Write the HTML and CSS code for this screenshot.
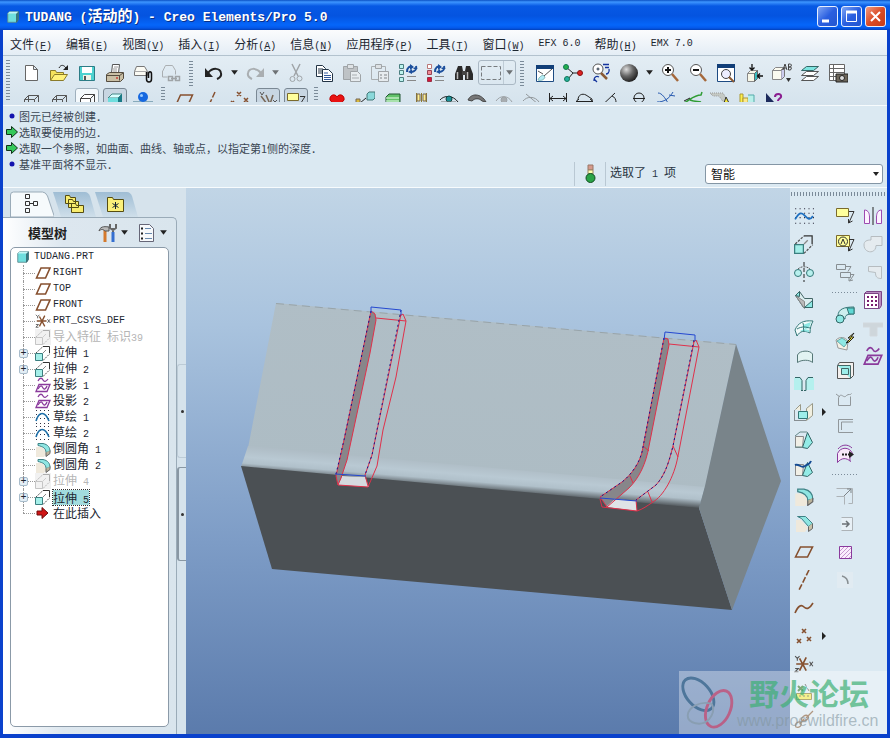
FILE: index.html
```html
<!DOCTYPE html>
<html lang="zh-CN">

<head>
	<meta charset="UTF-8">
	<title>TUDANG (活动的) - Creo Elements/Pro 5.0</title>
	<link rel="stylesheet" href="styles.css">
</head>

<body>

	<!-- 公用图标 -->
	<svg class="sprite">
		<symbol id="cube" viewBox="0 0 16 16">
			<path d="M2 4l2-2h10v9l-2 3H2z" fill="#6fdede" stroke="#5a8a90" />
			<path d="M12 14V4l2-2v9z" fill="#2a7f8c" stroke="#3d6a70" />
			<path d="M2 4l2-2h10l-2 2z" fill="#c4f4f4" stroke="none" />
		</symbol>
		<symbol id="plane" viewBox="0 0 16 16">
			<path d="M1.500 13l4.500-10h9l-4.500 10z" fill="none" stroke="#86502f" stroke-width="1.600" />
		</symbol>
		<symbol id="extrude" viewBox="0 0 16 16">
			<path d="M.5 8.500h7v7h-7z" fill="#a5efe9" stroke="#3b7f80" />
			<path d="M1 8l7-6.500M8 15.500l7-7" stroke="#555" stroke-dasharray="2 1" />
			<path d="M8 8l3-3" stroke="#888" />
			<path d="M8 1.500h6.500V8" stroke="#333" />
		</symbol>
		<symbol id="project" viewBox="0 0 16 16">
			<path d="M3 4c2-4 4-3 5-1s3 2 5-1M1 14.500l3-7h11l-3 7z" stroke="#8a3a9c" stroke-width="1.300" />
			<path d="M3 12c3-5 4-3 5-1s3 1 4-2" stroke="#8a3a9c" stroke-width="1.300" />
		</symbol>
		<symbol id="sketch" viewBox="0 0 18 16">
			<path d="M1 1.500h17M1 5.500h17M1 9.500h17M1 14.500h17" stroke="#334" stroke-dasharray="1 3" />
			<path d="M1 11c3-5 5-7 8-4s5 6 8 1" stroke="#1d6fc0" stroke-width="1.600" />
		</symbol>
		<symbol id="arc" viewBox="0 0 16 16">
			<path d="M1 1.500h15M1 5.500h15M1 9.500h15M1 14.500h15" stroke="#334" stroke-dasharray="1 3" />
			<path d="M1 12c3-10 9-10 13 0" stroke="#1d6fa8" stroke-width="1.600" />
		</symbol>
		<symbol id="round" viewBox="0 0 16 16">
			<path d="M1 6h6l5 6-3 4H1z" fill="#efe9dc" stroke="none" />
			<path d="M3 2.500h5c5 1 7 4 7 8l-4 1c0-4-3-6-8-7z" fill="#8fe6e2" stroke="#3f8286" />
			<path d="M11 11.500v4l4-3v-3" fill="#bbb39b" stroke="#666" />
		</symbol>
		<symbol id="csys" viewBox="0 0 18 16">
			<path d="M2 8h11M5 3l6 11M11 2L5 14" stroke="#86502f" stroke-width="1.500" />
			<path d="M1 1l2 2 2-2M3 3v2M14 6l3 4M17 6l-3 4M1 12h3l-3 3h3" stroke="#555" />
		</symbol>
		<symbol id="down" viewBox="0 0 8 8">
			<path d="M1 2h6L4 6z" fill="#222" stroke="none" />
		</symbol>
		<symbol id="wire" viewBox="0 0 20 20">
			<path d="M3.500 8.500h10v10h-10zM3.500 8.500l4-4h10l-4 4M17.500 4.500v10l-4 4M7.500 4.500v10h10M7.500 14.500l-4 4" stroke="#555" />
		</symbol>
		<symbol id="note" viewBox="0 0 20 20">
			<path d="M1.500 2.500h12v8h-12z" fill="#ffff9c" stroke="#7a6a2c" />
			<path d="M14 5.500h5l-5 11M13.500 13v4l4-2" stroke="#333" />
		</symbol>
	</svg>

	<div class="window">

		<div class="titlebar">
			<svg class="logo"><use href="#cube" /></svg>
			<h1>TUDANG (<span class="cn">活动的</span>) - Creo Elements/Pro 5.0</h1>
			<button class="win-btn" aria-label="最小化"><svg viewBox="0 0 19 19"><path d="M4 14h7" stroke="#fff" stroke-width="3" /></svg></button>
			<button class="win-btn" aria-label="最大化"><svg viewBox="0 0 19 19"><path d="M4.500 5v9.500h10V5" stroke="#fff" /><path d="M4 5h11" stroke="#fff" stroke-width="3" /></svg></button>
			<button class="win-btn close" aria-label="关闭"><svg viewBox="0 0 19 19"><path d="M5 5l9 9M14 5l-9 9" stroke="#fff" stroke-width="2" /></svg></button>
		</div>

		<nav class="menubar">
			<button><span class="cn">文件</span>(<u>F</u>)</button>
			<button><span class="cn">编辑</span>(<u>E</u>)</button>
			<button><span class="cn">视图</span>(<u>V</u>)</button>
			<button><span class="cn">插入</span>(<u>I</u>)</button>
			<button><span class="cn">分析</span>(<u>A</u>)</button>
			<button><span class="cn">信息</span>(<u>N</u>)</button>
			<button><span class="cn">应用程序</span>(<u>P</u>)</button>
			<button><span class="cn">工具</span>(<u>T</u>)</button>
			<button><span class="cn">窗口</span>(<u>W</u>)</button>
			<button>EFX 6.0</button>
			<button><span class="cn">帮助</span>(<u>H</u>)</button>
			<button>EMX 7.0</button>
		</nav>

		<div class="toolbars">
			<i class="grip first"></i>
			<div class="rows">
				<div class="toolbar">
					<button aria-label="新建"><svg viewBox="0 0 20 20"><path d="M4.500 2.500h8l4 4v11h-12zM12.500 2.500v4h4" fill="#fff" stroke="#666" /></svg></button>
					<button aria-label="打开"><svg viewBox="0 0 20 20"><path d="M1.500 17V7.500h5l1 2h7v3" fill="#f4e25c" stroke="#8a7b2a" /><path d="M1.500 17.500l4-6h13l-4 6z" fill="#fff27a" stroke="#8a7b2a" /><path d="M10 5c2-4 5-3 7 0" stroke="#222" /><path d="M19 2v5h-5z" fill="#222" stroke="none" /></svg></button>
					<button aria-label="保存"><svg viewBox="0 0 20 20"><path d="M2.500 3.500h15v14h-15z" fill="#4ed2d0" stroke="#2c7c86" /><path d="M5 4h10v6H5z" fill="#fff" stroke="none" /><path d="M6 12h8v5H6z" fill="#f2f2e6" stroke="none" /><path d="M8 13v4" stroke="#555" stroke-width="2" /></svg></button>
					<button aria-label="打印"><svg viewBox="0 0 20 20"><path d="M6.500 10l1-8.500h7l-1 8.500z" fill="#fff" stroke="#555" /><path d="M9 4h4M8 6h4M8 8h4" stroke="#999" /><path d="M1.500 11.500l3-2h14v6l-3 3h-14z" fill="#c9bfa5" stroke="#554c3f" /><path d="M1.500 12.500h13v5M14 13l4-3" stroke="#554c3f" /><path d="M11 15h2" stroke="#c00" /></svg></button>
					<button aria-label="附件"><svg viewBox="0 0 20 20"><path d="M1.500 8.500l2-5h8l3 5v4h-13z" fill="#fbfbf4" stroke="#777" /><path d="M2 8.500h12" stroke="#aaa" /><path d="M13.500 9v7c0 4 5 4 5 0v-5c0-3-3-3-3 0v4" stroke="#111" stroke-width="1.500" /></svg></button>
					<button disabled aria-label="链接"><svg viewBox="0 0 20 20"><path d="M1.500 8.500l3-6h7l3 5v4M1.500 8v6h5" stroke="#888" /><path d="M7.500 13.500h4v4h-4zM14.500 13.500h4v4h-4zM10 15.500h6" stroke="#777" stroke-width="1.500" /></svg></button>
					<i class="grip"></i>
					<button aria-label="撤消"><svg viewBox="0 0 20 20"><path d="M4 10c5-6 12-5 13 0 1 4-2 5-4 6" stroke="#222" stroke-width="2" /><path d="M1 5v9h8z" fill="#222" stroke="none" /></svg></button>
					<button class="more" aria-label="撤消列表"><svg><use href="#down" /></svg></button>
					<button disabled aria-label="重做"><svg viewBox="0 0 20 20"><path d="M16 10C11 4 4 5 3 10c-1 4 2 5 4 6" stroke="#888" stroke-width="2" /><path d="M19 5v9h-8z" fill="#888" stroke="none" /></svg></button>
					<button disabled class="more" aria-label="重做列表"><svg><use href="#down" /></svg></button>
					<button disabled aria-label="剪切"><svg viewBox="0 0 20 20"><path d="M6 1l6 12M14 1L8 13" stroke="#777" stroke-width="1.500" /><circle cx="6.500" cy="16" r="2.500" stroke="#777" /><circle cx="13.500" cy="15.500" r="2.500" stroke="#777" /></svg></button>
					<button aria-label="复制"><svg viewBox="0 0 20 20"><path d="M2.500 2.500h6l3 3v8h-9z" fill="#fff" stroke="#234" /><path d="M4 6h5M4 8h6M4 10h6" stroke="#234" /><path d="M8.500 6.500h6l4 4v8h-10z" fill="#fff" stroke="#234" /><path d="M10 10h4M10 12.500h7M10 14.500h7M10 16.500h7" stroke="#345a9c" /></svg></button>
					<button disabled aria-label="粘贴"><svg viewBox="0 0 20 20"><path d="M1.500 3.500h14v13h-14z" fill="#aaa" stroke="#777" /><path d="M5.500 1.500h6v4h-6z" fill="#ddd" stroke="#777" /><path d="M8.500 8.500h7l3 3v7h-10z" fill="#eee" stroke="#777" /><path d="M10 12h5M10 15h7" stroke="#888" /></svg></button>
					<button disabled aria-label="选择性粘贴"><svg viewBox="0 0 20 20"><path d="M1.500 3.500h14v13h-14z" stroke="#888" /><path d="M5.500 1.500h6v4h-6z" fill="#ddd" stroke="#777" /><path d="M8.500 8.500h10v10h-10z" fill="#eee" stroke="#777" /><path d="M10 12h2M14 12h3M10 15h2M14 15h3" stroke="#444" /></svg></button>
					<button aria-label="再生"><svg viewBox="0 0 20 20"><path d="M1.500 1.500h4v4h-4zM1.500 7.500h4v4h-4zM1.500 14.500h4v4h-4z" fill="#bdf3ee" stroke="#4a7f80" /><path d="M9 9c0-5 3-6 5-5M18 3c1 4-1 5-4 6" stroke="#1c4f9c" stroke-width="2" /><path d="M12 1l4 3-4 3zM14 6v5l-4-2zM17 4l3 2h-5z" fill="#1c4f9c" stroke="none" /><path d="M9 13.500h9M9 17.500h9" stroke="#888" /></svg></button>
					<button aria-label="再生管理器"><svg viewBox="0 0 20 20"><path d="M1.500 1.500h4v4h-4z" fill="#fff" stroke="#b77" /><path d="M1.500 7.500h4v4h-4z" fill="#f08a94" stroke="#945" /><path d="M1.500 14.500h4v4h-4z" fill="#d8143c" stroke="#934" /><path d="M9 9c0-5 3-6 5-5M18 3c1 4-1 5-4 6" stroke="#1c4f9c" stroke-width="2" /><path d="M12 1l4 3-4 3zM14 6v5l-4-2zM17 4l3 2h-5z" fill="#1c4f9c" stroke="none" /><path d="M9 13.500h9M9 17.500h9" stroke="#888" /></svg></button>
					<button aria-label="查找"><svg viewBox="0 0 20 20"><path d="M4 3h4l1 5v9H1v-6zM12 3h4l3 8v6h-8V8z" fill="#2b2b2b" stroke="none" /><path d="M8 8h4v4H8z" fill="#444" stroke="none" /><path d="M3.500 9v7M13.500 9v7" stroke="#bbb" stroke-width="1.500" /></svg></button>
					<div class="select-box">
						<button disabled aria-label="框选"><svg viewBox="0 0 20 20"><path d="M.5 3.500h19v13H.5z" stroke="#333" stroke-dasharray="4 2" /></svg></button>
						<button disabled class="more" aria-label="框选方式"><svg><use href="#down" /></svg></button>
					</div>
					<i class="grip"></i>
					<button aria-label="重画"><svg viewBox="0 0 20 20"><path d="M1.500 2.500h17v16h-17z" fill="#fff" stroke="#1d4b82" /><path d="M1 4h18" stroke="#123f78" stroke-width="4" /><path d="M3 17c1-3 3-4 5-5l2 2c-1 3-4 4-7 3z" fill="#b4ecf4" stroke="#8bb" /><path d="M9 13l8-7M3 8l5 3" stroke="#555" /></svg></button>
					<button aria-label="定向"><svg viewBox="0 0 20 20"><path d="M3 4l7 6-5 6M10 10h6" stroke="#222" /><circle cx="3" cy="4" r="2.500" fill="#25b04b" stroke="#175" /><circle cx="4" cy="16" r="2.500" fill="#25b0a0" stroke="#175" /><circle cx="17" cy="10" r="2.500" fill="#d22" stroke="#811" /></svg></button>
					<button aria-label="旋转中心"><svg viewBox="0 0 20 20"><circle cx="7" cy="6" r="5" fill="#fff" stroke="#555" /><path d="M7 4.500v3M5.500 6h3" stroke="#234" /><path d="M10 10l6 6" stroke="#8a5a34" stroke-width="2.500" /><path d="M12 1.500h6M14 4.500h4M18 6c1 4-2 5-3 5M3 18c0-5 3-5 5-4M3 16l3 3" stroke="#14339c" stroke-width="1.300" /></svg></button>
					<button aria-label="着色"><svg viewBox="0 0 20 20"><defs><radialGradient id="ball" cx=".35" cy=".3" r=".75"><stop offset="0" stop-color="#ddd" /><stop offset=".5" stop-color="#666" /><stop offset="1" stop-color="#1a1a1a" /></radialGradient></defs><circle cx="10" cy="10" r="9" fill="url(#ball)" stroke="none" /></svg></button>
					<button class="more" aria-label="着色列表"><svg><use href="#down" /></svg></button>
					<button aria-label="放大"><svg viewBox="0 0 20 20"><circle cx="8" cy="7" r="5.500" fill="#fff" stroke="#555" /><path d="M5 7h6M8 4v6" stroke="#111" stroke-width="2" /><path d="M12 11l6 7" stroke="#a5683b" stroke-width="2.500" /></svg></button>
					<button aria-label="缩小"><svg viewBox="0 0 20 20"><circle cx="8" cy="7" r="5.500" fill="#fff" stroke="#555" /><path d="M5 7h6" stroke="#111" stroke-width="2" /><path d="M12 11l6 7" stroke="#a5683b" stroke-width="2.500" /></svg></button>
					<button aria-label="重新调整"><svg viewBox="0 0 20 20"><path d="M1.500 2.500h17v16h-17z" fill="#fff" stroke="#1d4b82" /><path d="M1 3h18" stroke="#123f78" stroke-width="4" /><circle cx="10" cy="11" r="4.500" fill="#eef" stroke="#444" /><path d="M13 14l5 5" stroke="#8a5a34" stroke-width="2" /></svg></button>
					<button aria-label="视图方向"><svg viewBox="0 0 20 20"><path d="M3.500 10.500l3-3h7l-3 3zM3.500 10.500h7v8h-7z" fill="#f7f7e8" stroke="#888" /><path d="M10.500 10.500l3-3v8l-3 3z" fill="#38c0c0" stroke="#666" /><path d="M8 1v6M5.500 4.500L8 7l2.500-2.500M19 13h-5M16 10.500L13.500 13l2.500 2.500" stroke="#111" stroke-width="1.300" /></svg></button>
					<button aria-label="已命名视图"><svg viewBox="0 0 20 20"><path d="M.5 7.500l3-3h8l-3 3zM.5 7.500h9v9h-9z" fill="#fafaf0" stroke="#888" /><path d="M9.500 7.500l3-3v9l-3 3" fill="#cce" stroke="#777" /><path d="M11 7l2-6 2 6M12 5h2M16.500 7V1h2l1 1-1 2h-2 2l1 1-1 2z" stroke="#444" /><path d="M14 15h5l-2.500 4z" fill="#333" stroke="none" /></svg></button>
					<button aria-label="层"><svg viewBox="0 0 20 20"><path d="M1.500 17.500l5-4h12l-5 4zM1.500 12.500l5-4h12l-5 4z" fill="#fff" stroke="#555" /><path d="M1.500 7.500l5-4h12l-5 4z" fill="#7de4e0" stroke="#366" /></svg></button>
					<button aria-label="视图管理器"><svg viewBox="0 0 20 20"><path d="M1.500 1.500h15v16h-15zM1 5.500h15M1 9.500h15M1 13.500h15M5.500 1v16" fill="#fff" stroke="#666" /><path d="M8 11h12v8H8z" fill="#6d665a" stroke="#222" /><circle cx="14" cy="15" r="2.500" fill="#ddd" stroke="#222" /></svg></button>
				</div>

				<div class="toolbar second">
					<button aria-label="线框"><svg><use href="#wire" /></svg></button>
					<button aria-label="隐藏线"><svg><use href="#wire" /></svg></button>
					<button class="raised" aria-label="无隐藏线"><svg viewBox="0 0 20 20"><path d="M3.500 7.500h10v10h-10zM3.500 7.500l4-4h10l-4 4M17.500 3.500v10l-4 4" fill="#fff" stroke="#444" /></svg></button>
					<button class="pressed" aria-label="着色显示"><svg viewBox="0 0 20 20"><path d="M3 7l4-4h10l-4 4z" fill="#d8ffff" stroke="#488" /><path d="M3 7h10v11H3z" fill="#6fdede" stroke="none" /><path d="M13 7l4-4v11l-4 4z" fill="#187a86" stroke="none" /></svg></button>
					<button aria-label="增强真实感"><svg viewBox="0 0 20 20"><path d="M0 10.500h20" stroke="#8ab" /><circle cx="10" cy="6" r="5" fill="#1668e0" stroke="none" /><circle cx="8.500" cy="4.500" r="1.500" fill="#9cf" stroke="none" /></svg></button>
					<i class="grip"></i>
					<button aria-label="平面显示"><svg viewBox="0 0 20 20"><path d="M1.500 15l5-11h12l-5 11z" stroke="#86502f" stroke-width="1.500" /></svg></button>
					<button aria-label="轴显示"><svg viewBox="0 0 20 20"><path d="M13 1L7 14" stroke="#86502f" stroke-width="1.500" stroke-dasharray="6 2" /></svg></button>
					<button aria-label="点显示"><svg viewBox="0 0 20 20"><path d="M7 1l4 4M11 1L7 5M14 7l4 4M18 7l-4 4M1 10l3 3M4 10l-3 3" stroke="#86502f" stroke-width="1.500" /></svg></button>
					<button class="pressed" aria-label="坐标系显示"><svg viewBox="0 0 20 20"><path d="M2 1l2 3 2-3M15 9l4 4M19 9l-4 4" stroke="#555" /><path d="M8 4l4 9 3-9M3 5l6 8" stroke="#765" stroke-width="1.500" /></svg></button>
					<button class="pressed" aria-label="注释显示"><svg viewBox="0 0 20 20"><path d="M1.500 2.500h11v7h-11z" fill="#ffff9c" stroke="#7a6a2c" /><path d="M14 5.500h5l-5 8" stroke="#333" /></svg></button>
					<i class="grip"></i>
					<button aria-label="收藏"><svg viewBox="0 0 20 20"><path d="M10 17L3 9c-1-5 5-7 7-3 2-4 8-2 7 3z" fill="#e81212" stroke="#b00" /></svg></button>
					<button aria-label="装配"><svg viewBox="0 0 20 20"><path d="M1 8h4v4H1z" fill="#d9b93c" stroke="#765" /><path d="M5 12l6-5" stroke="#222" /><path d="M12 3l2-2h6v6l-2 2h-6z" fill="#8ad8da" stroke="#477" /></svg></button>
					<button aria-label="面板"><svg viewBox="0 0 20 20"><path d="M3 6l3-3h11v10H3z" fill="#62c36a" stroke="#253" /><path d="M3 7h13M3 10h13" stroke="#efe" /></svg></button>
					<button aria-label="销钉"><svg viewBox="0 0 20 20"><path d="M5.500 2v9M10.500 2v11M15.500 2v9" stroke="#8d7a2e" /><path d="M6 3h3v7H6zM12 3h3v7h-3z" fill="#ffef8c" stroke="#765" /></svg></button>
					<button aria-label="显示"><svg viewBox="0 0 20 20"><path d="M1 9c4-5 13-5 18 2" stroke="#222" /><circle cx="10" cy="8" r="3" fill="#1a8f96" stroke="#144" /><path d="M2 11h15" stroke="#777" /></svg></button>
					<div class="tight">
						<button aria-label="遮蔽"><svg viewBox="0 0 20 20"><path d="M1 9c3-7 13-7 18 2l-4-1c-3-3-7-3-10 0z" fill="#777" stroke="#444" /></svg></button>
						<button disabled aria-label="取消遮蔽"><svg viewBox="0 0 20 20"><path d="M2 10c4-6 12-6 16 1" stroke="#777" /><circle cx="10" cy="9" r="3" fill="#888" stroke="#777" /></svg></button>
						<button disabled aria-label="隐藏"><svg viewBox="0 0 20 20"><path d="M2 10c4-5 12-5 16 1M5 3l12 10" stroke="#666" /></svg></button>
						<button aria-label="距离"><svg viewBox="0 0 20 20"><path d="M1.500 2v10M18.500 2v10M2 7.500h16M5 5L2 7.500 5 10M15 5l3 2.500-3 2.500" stroke="#222" /></svg></button>
						<button aria-label="长度"><svg viewBox="0 0 20 20"><path d="M3 9c0-5 4-7 8-5l6 4v2M1 10.500h17M4 8l-3 2.500 3 2.500M15 8l3 2.500-3 2.500" stroke="#222" /></svg></button>
						<button aria-label="角度"><svg viewBox="0 0 20 20"><path d="M16 11.500H3L13 2M10 5c3 1 4 4 4 6" stroke="#222" /></svg></button>
						<button aria-label="直径"><svg viewBox="0 0 20 20"><circle cx="10" cy="7" r="5" stroke="#222" /><path d="M4 7.500h12" stroke="#222" /></svg></button>
						<button aria-label="曲率"><svg viewBox="0 0 20 20"><path d="M1 11c7 0 12-3 16-10M2 2c4 0 7 5 10 10M13 4l6 1" stroke="#2659b0" /></svg></button>
						<button aria-label="拔模检查"><svg viewBox="0 0 20 20"><path d="M1 12c6-3 10-8 17-8l1-3M7 9c5 2 8 1 11 2" stroke="#2f9c34" stroke-width="1.500" /><path d="M1 10l6-3" stroke="#222" /></svg></button>
						<button aria-label="测量面积"><svg viewBox="0 0 20 20"><path d="M0 2h13l6 10h-5L9 5H3z" fill="#c4c9c4" stroke="#999" stroke-dasharray="1 1" /><path d="M16 6l3 6h-5z" fill="#f6e83c" stroke="#333" /></svg></button>
						<button aria-label="体积"><svg viewBox="0 0 20 20"><path d="M3 3h3v10H3z" fill="#fff04a" stroke="#a93" /><path d="M6 7h5v6H6z" fill="#ffe98a" stroke="#a93" /><path d="M11 4h6v9h-6" fill="#b9f0ea" stroke="#5aa" /></svg></button>
						<button aria-label="上下文帮助"><svg viewBox="0 0 20 20"><path d="M2 2l8 9H2z" fill="#1c2a5c" stroke="none" /><path d="M11 6c0-4 7-4 6 0-1 2-3 2-3 4M14 11v2" stroke="#8a1d8f" stroke-width="2" /></svg></button>
					</div>
				</div>
			</div>
		</div>

		<div class="info">
			<ul class="messages">
				<li><svg viewBox="0 0 12 12"><circle cx="6" cy="6" r="2.500" fill="#1313ae" stroke="none" /></svg>图元已经被创建．</li>
				<li><svg viewBox="0 0 12 12"><path d="M.5 3.500h5v-3l6 5.500-6 5.500v-3h-5z" fill="#35c95a" stroke="#12321b" /></svg>选取要使用的边．</li>
				<li><svg viewBox="0 0 12 12"><path d="M.5 3.500h5v-3l6 5.500-6 5.500v-3h-5z" fill="#35c95a" stroke="#12321b" /></svg>选取一个参照，如曲面、曲线、轴或点，以指定第1侧的深度．</li>
				<li><svg viewBox="0 0 12 12"><circle cx="6" cy="6" r="2.500" fill="#1313ae" stroke="none" /></svg>基准平面将不显示．</li>
			</ul>
			<div class="status">
				<span class="light"><svg viewBox="0 0 12 20"><path d="M4 1h5v5H4z" fill="#d69a8c" stroke="#976" /><path d="M4 6h5v4H4z" fill="#ffffb0" stroke="#986" /><circle cx="6.500" cy="14" r="4.500" fill="#2aa447" stroke="#134d22" /></svg></span>
				<label for="filter"><span class="cn">选取了</span> 1 <span class="cn">项</span></label>
				<div class="filter">
					<select id="filter"><option>智能</option></select>
				</div>
			</div>
		</div>

		<div class="main">

			<aside class="navigator">
				<div class="tabs">
					<button aria-label="模型树"><svg viewBox="0 0 44 27"><path d="M.5 27V5q0-3 3-3h29q3 0 5 4l7 21z" fill="#f6fafc" stroke="#9aabb8" /><path d="M15.500 4.500h4v4h-4zM15.500 11.500h4v4h-4zM15.500 18.500h4v4h-4zM23.500 11.500h4v4h-4zM20 13.500h3" stroke="#333" /></svg></button>
					<button aria-label="文件夹浏览器"><svg viewBox="0 0 42 27"><path d="M0 2h32q3 0 5 4l6 21H8z" fill="url(#tab)" stroke="none" /><path d="M12.500 13.500v-8h4l1 2h5v6zM15.500 17.500v-8h4l1 2h5v6zM18.500 22.500v-9h4l1 2h7v7z" fill="#f8ec6e" stroke="#554c12" /></svg></button>
					<button aria-label="收藏夹"><svg viewBox="0 0 42 27"><defs><linearGradient id="tab" x1="0" y1="0" x2="0" y2="1"><stop offset="0" stop-color="#9fbdd4" /><stop offset="1" stop-color="#cfdfea" /></linearGradient></defs><path d="M0 2h32q3 0 5 4l6 21H8z" fill="url(#tab)" stroke="none" /><path d="M12.500 21.500v-14h5l1 2h10v12z" fill="#fbf07a" stroke="#554c12" /><path d="M20.500 12v7M17.500 13.500l6 4M23.500 13.500l-6 4" stroke="#123" /></svg></button>
				</div>

				<div class="panel">
					<div class="panel-head">
						<h2>模型树</h2>
						<button aria-label="设置"><svg viewBox="0 0 20 20"><path d="M7 7v12" stroke="#d4792d" stroke-width="3" /><path d="M1 8c1-4 4-5 10-4v4H7C5 6 3 6 1 8z" fill="#b9b9b9" stroke="#555" /><path d="M15 9v10" stroke="#356fd0" stroke-width="3" /><path d="M12 1v4l3 2 3-2V1M15 5v4" stroke="#666" stroke-width="2" /></svg></button>
						<button class="more" aria-label="设置列表"><svg><use href="#down" /></svg></button>
						<button aria-label="显示"><svg viewBox="0 0 20 20"><path d="M2.500 1.500h10l4 4v13h-14z" fill="#f7f9fb" stroke="#667" /><path d="M4 5.500h2M4 10.500h2M4 15.500h2" stroke="#222" stroke-width="2" /><path d="M8 5.500h6M8 10.500h7M8 15.500h7" stroke="#678ab0" /></svg></button>
						<button class="more" aria-label="显示列表"><svg><use href="#down" /></svg></button>
					</div>

					<div class="tree">
						<div class="root"><svg><use href="#cube" /></svg>TUDANG.PRT</div>
						<ul>
							<li><svg><use href="#plane" /></svg><span>RIGHT</span></li>
							<li><svg><use href="#plane" /></svg><span>TOP</span></li>
							<li><svg><use href="#plane" /></svg><span>FRONT</span></li>
							<li><svg><use href="#csys" /></svg><span>PRT_CSYS_DEF</span></li>
							<li class="off"><svg><use href="#extrude" /></svg><span><span class="cn">导入特征</span> <span class="cn">标识</span>39</span></li>
							<li><button aria-label="展开">+</button><svg><use href="#extrude" /></svg><span><span class="cn">拉伸</span> 1</span></li>
							<li><button aria-label="展开">+</button><svg><use href="#extrude" /></svg><span><span class="cn">拉伸</span> 2</span></li>
							<li><svg><use href="#project" /></svg><span><span class="cn">投影</span> 1</span></li>
							<li><svg><use href="#project" /></svg><span><span class="cn">投影</span> 2</span></li>
							<li><svg><use href="#arc" /></svg><span><span class="cn">草绘</span> 1</span></li>
							<li><svg><use href="#arc" /></svg><span><span class="cn">草绘</span> 2</span></li>
							<li><svg><use href="#round" /></svg><span><span class="cn">倒圆角</span> 1</span></li>
							<li><svg><use href="#round" /></svg><span><span class="cn">倒圆角</span> 2</span></li>
							<li class="off"><button aria-label="展开">+</button><svg><use href="#extrude" /></svg><span><span class="cn">拉伸</span> 4</span></li>
							<li class="selected"><button aria-label="展开">+</button><svg><use href="#extrude" /></svg><span><span class="cn">拉伸</span> 5</span></li>
							<li><svg viewBox="0 0 16 16"><path d="M2 6h5V2.500L13 8l-6 5.500V10H2z" fill="#cf1515" stroke="#6e0c0c" /></svg><span class="cn">在此插入</span></li>
						</ul>
					</div>
				</div>
				<div class="sash">
					<button aria-label="折叠"></button>
					<button class="on" aria-label="拖动"></button>
				</div>
			</aside>

			<div class="viewport">
				<svg viewBox="186 188 604 546">
					<defs>
						<linearGradient id="top" gradientUnits="userSpaceOnUse" x1="480" y1="310" x2="465" y2="480">
							<stop offset="0" stop-color="#b0bec6" />
							<stop offset="1" stop-color="#adbcc4" />
						</linearGradient>
						<linearGradient id="edge" gradientUnits="userSpaceOnUse" x1="472" y1="465" x2="470" y2="490">
							<stop offset="0" stop-color="#afbdc6" />
							<stop offset=".4" stop-color="#b9c9d3" />
							<stop offset=".65" stop-color="#b0c0ca" />
							<stop offset="1" stop-color="#4e5458" />
						</linearGradient>
					</defs>
					<!-- 实体 -->
					<path d="M276 303L736 344 705 488 248 448z" fill="url(#top)" />
					<path d="M248 446L705 487 699 509 241 467z" fill="url(#edge)" />
					<path d="M241 466L699 508 732 610 272 569z" fill="#4b5054" />
					<path d="M736 344L781 481 732 610 699 508 705 486z" fill="#79848a" />
					<path d="M276 303.500L736 344.500" stroke="#98a4aa" stroke-dasharray="8 5" />
					<!-- 左侧槽 -->
					<path d="M371 311l4 3 1 6-6 33-23 107-6 18-3 7-2-9 8-36z" fill="#87868a" />
					<path d="M342 476l23 1 4 10-31-2z" fill="#d5dadf" />
					<g stroke="#e0304a">
						<path d="M371 311l4 3 1 6-6 33-23 107-6 18-3 7-2-9 8-36z" />
						<path d="M376 318l30 3-3-7-3 2M406 321l-10 56-13 53-6 36-9 21-30-2M401 314l-29 141-7 20 3 11" />
					</g>
					<path d="M371 311l-27 129-8 34M401 310l-29 145-7 20" stroke="#14148c" stroke-dasharray="2 3" />
					<path d="M371 313v-6l30 3v5M335 474l31 2" stroke="#2448d0" />
					<!-- 右侧槽 -->
					<path d="M664 338l4 1 1 6-20 101c-3 18-10 32-20 42l-22 19-7-10 22-15c10-8 19-20 21-35z" fill="#87868a" />
					<path d="M606 507l9-8 21 2 1 10z" fill="#dfe3e6" />
					<g stroke="#e0304a">
						<path d="M664 338l4 1 1 6-20 101c-3 18-10 32-20 42l-22 19-7-10 22-15c10-8 19-20 21-35z" />
						<path d="M669 344l30 3-3-7-3 3M699 347l-21 109c-4 22-15 40-25 46-6 4-10 7-16 9l-35-4-2-8M694 342l-21 104c-5 20-9 30-17 39l-20 15 1 11" />
						<path d="M673 446l5 11M648 492l4 10M630 476l3 7M643 446l6 5" />
					</g>
					<path d="M664 338l-21 109c-2 14-11 27-21 35l-22 15M694 340l-21 106c-5 20-9 30-17 39l-20 15" stroke="#14148c" stroke-dasharray="2 3" />
					<path d="M664 340l1-8 30 3v6M600 498l37 3" stroke="#2448d0" />
				</svg>
			</div>

			<div class="features">
				<div class="col wide">
					<button aria-label="草绘"><svg viewBox="0 0 18 16"><use href="#sketch" /></svg></button>
					<button aria-label="拉伸"><svg><use href="#extrude" /></svg></button>
					<button aria-label="旋转"><svg viewBox="0 0 20 20"><path d="M10 0v20" stroke="#222" stroke-dasharray="4 2" /><circle cx="4" cy="11" r="3.500" fill="#b8f0ee" stroke="#377" /><circle cx="16" cy="11" r="3.500" fill="#b8f0ee" stroke="#377" /><path d="M4 7c3-3 9-3 12 0" stroke="#555" stroke-dasharray="2 1" /></svg></button>
					<button aria-label="可变截面扫描"><svg viewBox="0 0 20 20"><path d="M1.500 5.500l4-4 5 7h8v9h-9z" fill="#dceef0" stroke="#466" /><path d="M1.500 5.500l9 6v7z" fill="#bbb" stroke="#888" /><path d="M1.500 5.500l4-4v5zM10.500 17.500h8v-7z" fill="#8ee8e4" stroke="#366" /></svg></button>
					<button aria-label="边界混合"><svg viewBox="0 0 20 20"><path d="M1 12c3-7 8-10 18-9-2 4-3 7-3 12-6-3-10-2-13 3z" fill="#f2fbfb" stroke="#377" /><path d="M9 7l8-3-2 6-4 1zM6 13l4-2 5 1v2l-6-1z" fill="#8ee8e4" stroke="none" /><path d="M3 11c5-3 9-2 13-1M9 5c1 3 0 6 1 9" stroke="#377" /></svg></button>
					<button aria-label="造型"><svg viewBox="0 0 20 20"><path d="M3.500 16.500V9c2-5 13-5 15-1v8.500c-3-3-11-3-15 0z" fill="#e2f3f2" stroke="#577" /></svg></button>
					<button aria-label="孔"><svg viewBox="0 0 20 20"><path d="M0 4h6l2 3v9H0zM20 4h-6l-2 3v9h8z" fill="#b4f0ee" stroke="none" /><path d="M1 3.500h5l2 3v10M19 3.500h-5l-2 3v10" stroke="#366" /><path d="M7 16.500h6" stroke="#366" stroke-dasharray="2 1" /></svg></button>
					<button aria-label="壳"><svg viewBox="0 0 20 20"><path d="M12.500 6.500l6-5v12l-6 5z" fill="#f1efe0" stroke="#998" /><path d="M1.500 7.500l5-5v6" fill="#f1efe0" stroke="#998" /><path d="M4.500 9.500h9v7h-9z" fill="#9deeea" stroke="#377" /><path d="M.5 8.500v10h12" stroke="#333" stroke-dasharray="1 1" /></svg></button>
					<button aria-label="筋"><svg viewBox="0 0 20 20"><path d="M1.500 6.500h8l-1 11h-7z" fill="#f1efe6" stroke="#888" /><path d="M8.500 17.500l5-15 5 10-5 6z" fill="#93ebe6" stroke="#366" /><path d="M1 6l5-4h7M1 17h8" stroke="#688" /></svg></button>
					<button aria-label="轨迹筋"><svg viewBox="0 0 20 20"><path d="M1.500 6.500h8l-1 11h-7z" fill="#f1efe6" stroke="#888" /><path d="M8.500 17.500l5-13 5 10-5 4z" fill="#93ebe6" stroke="#366" /><path d="M1 7c4-2 6 4 10 1 3-2 5-2 6-5" stroke="#134b94" stroke-width="2" /></svg></button>
					<button aria-label="倒圆角"><svg><use href="#round" /></svg></button>
					<button aria-label="倒角"><svg viewBox="0 0 20 20"><path d="M2 6h5l7 8-3 4H2z" fill="#efe9dc" stroke="none" /><path d="M3.500 2.500h8l7 7-4 3-7-8z" fill="#8fe6e2" stroke="#3f8286" /><path d="M14.500 12.500v5l4-3v-5" fill="#c9c2a9" stroke="#666" /></svg></button>
					<button aria-label="平面"><svg viewBox="0 0 20 20"><path d="M1.500 15l5-10h12l-5 10z" stroke="#86502f" stroke-width="1.600" /></svg></button>
					<button aria-label="轴"><svg viewBox="0 0 20 20"><path d="M15 0L5 20" stroke="#86502f" stroke-width="1.600" stroke-dasharray="6 2" /></svg></button>
					<button aria-label="曲线"><svg viewBox="0 0 20 20"><path d="M1 15c3-7 6-9 9-6s6 1 9-4" stroke="#86502f" stroke-width="1.600" /></svg></button>
					<button aria-label="点"><svg viewBox="0 0 20 20"><path d="M8 3l4 4M12 3L8 7M3 13l4 4M7 13l-4 4M13 11l4 4M17 11l-4 4" stroke="#86502f" stroke-width="1.600" /></svg></button>
					<button aria-label="坐标系"><svg><use href="#csys" /></svg></button>
					<button aria-label="分析特征"><svg viewBox="0 0 20 20"><path d="M4 4l5 5M9 4L4 9" stroke="#3a7a33" stroke-width="2" /><path d="M11 2l4 7" stroke="#555" stroke-dasharray="3 2" /><path d="M2.500 11.500h15v6h-15z" fill="#efe74f" stroke="#8a7b2a" /><path d="M5 14h2M9 14h2M13 14h2" stroke="#664" /></svg></button>
					<button aria-label="参照"><svg viewBox="0 0 20 20"><path d="M2 17c-2-4 4-7 5-4s-2 5-5 4zM8 11c-2-4 4-7 6-5s-3 6-6 5zM6 14l4-5M12 8l7-7" stroke="#86603f" stroke-width="1.300" /></svg></button>
				</div>
				<i class="fly one"></i>
				<i class="fly two"></i>
				<div class="col">
					<button aria-label="注释"><svg><use href="#note" /></svg></button>
					<button aria-label="注释元素"><svg viewBox="0 0 20 20"><path d="M1.500 1.500h13v11h-13z" fill="#ffff9c" stroke="#7a6a2c" /><circle cx="8" cy="7.500" r="4.500" stroke="#333" /><path d="M6 10l2-5 2 5M14 5.500h5l-5 11M13.500 13v4l4-2" stroke="#333" /></svg></button>
					<button disabled aria-label="传播"><svg viewBox="0 0 20 20"><path d="M1.500 2.500h9v5h-9zM5.500 10.500h10v5h-10zM11 4.500h5l-3 5M15 12.500h4l-4 6M14 16v3l4-1" stroke="#444" /></svg></button>
					<i class="dots"></i>
					<button aria-label="扫描"><svg viewBox="0 0 20 20"><path d="M3 12c0-7 6-9 16-9v7c-7 0-9 1-9 5z" fill="#cdeeee" stroke="#377" /><path d="M12 4h7v6h-5z" fill="#5fd8d4" stroke="#377" /><circle cx="5" cy="15" r="4" fill="#8ee8e4" stroke="#366" /></svg></button>
					<button aria-label="自由曲面"><svg viewBox="0 0 20 20"><path d="M1 8c4-4 9-3 12 1l-1 9-9-2z" fill="#f5f2e6" stroke="#999" /><path d="M2 9l5-3 6 4-4 5z" fill="#8ee8e4" stroke="#6aa" /><path d="M19 1l-6 5h3l-5 5 3-1 5-5h-3z" fill="#f6e83c" stroke="#222" /></svg></button>
					<button aria-label="抽壳"><svg viewBox="0 0 20 20"><path d="M2.500 5.500l2-3h14v13l-3 3h-13z" fill="#f4f0ee" stroke="#555" /><path d="M2.500 5.500h13v13M6.500 8.500h7v6h-7z" fill="#9deeea" stroke="#466" /></svg></button>
					<button disabled aria-label="填充"><svg viewBox="0 0 20 20"><path d="M3.500 17.500v-8c3-6 5 2 8-2 2-2 4 0 5-2M1 6l4 3M3.500 17.500h12v-9" stroke="#555" /></svg></button>
					<button disabled aria-label="偏移"><svg viewBox="0 0 20 20"><path d="M18 3.500H3.500v13H18M6.500 14V6H18" stroke="#555" /></svg></button>
					<button aria-label="延伸"><svg viewBox="0 0 20 20"><path d="M2.500 18.500v-9c3-7 12-7 15 0-1 3-4 4-2 8-4-4-9-4-13 1z" fill="#f8e8fa" stroke="#8a3a9c" /><path d="M3 5c4-5 10-5 14-1" stroke="#8a3a9c" /><path d="M7 10.500h8" stroke="#222" stroke-width="2" stroke-dasharray="2 1" /><path d="M14 7l5 3.500-5 3.500z" fill="#222" stroke="none" /></svg></button>
					<i class="dots"></i>
					<button disabled aria-label="缩放"><svg viewBox="0 0 20 20"><path d="M1.500 2.500h16v15h-4M1.500 10.500h8v8" stroke="#888" /><path d="M9 10l7-7M12 3h4v4" stroke="#333" /></svg></button>
					<button disabled aria-label="移动"><svg viewBox="0 0 20 20"><path d="M6.500 3.500h11v13h-11" fill="#f4f7fa" stroke="#888" /><path d="M7 10h7M11 7l3 3-3 3" stroke="#111" stroke-width="1.500" /></svg></button>
					<button aria-label="剖面"><svg viewBox="0 0 20 20"><path d="M4.500 4.500h12v12h-12z" fill="#fbeefd" stroke="#8a3a9c" /><path d="M5 9l4-4M5 13l8-8M6 16L16 6M10 16l6-6M14 16l2-2" stroke="#c79ad0" /></svg></button>
					<button disabled aria-label="圆弧"><svg viewBox="0 0 20 20"><path d="M2 2h16v16H2z" fill="#e6eef3" stroke="none" /><path d="M7 6c4 1 6 3 6 8" stroke="#444" stroke-width="1.500" /></svg></button>
				</div>
				<div class="col">
					<button aria-label="镜像"><svg viewBox="0 0 20 20"><path d="M1.500 17.500V4c4 0 5 4 5 7v6.500zM18.500 17.500V4c-4 0-5 4-5 7v6.500z" fill="#fdf2ff" stroke="#9c4ab0" /><path d="M10 1v18" stroke="#222" /></svg></button>
					<button disabled aria-label="合并"><svg viewBox="0 0 20 20"><path d="M1 11c0-4 3-5 7-5V2.500h11v9h-6c0 9-12 8-12-.5z" fill="#eee" stroke="#999" /></svg></button>
					<button disabled aria-label="修剪"><svg viewBox="0 0 20 20"><path d="M5.500 4.500h13v12c-5 0-6-2-6-6l-7-1z" fill="#eee" stroke="#999" /></svg></button>
					<button aria-label="阵列"><svg viewBox="0 0 20 20"><path d="M1.500 3.500l2-2h15v14l-2 3h-15z" fill="#b98cc0" stroke="#7a4485" /><path d="M1.500 3.500h14v15h-14z" fill="#fff" stroke="#7a4485" /><path d="M4 7h10M4 11h10M4 15h10" stroke="#7a1d6f" stroke-width="2" stroke-dasharray="2 2" /></svg></button>
					<button disabled aria-label="加厚"><svg viewBox="0 0 20 20"><path d="M0 5h20v4h-6v9H7V9H0z" fill="#c4c8ca" stroke="#ccc" /></svg></button>
					<button aria-label="投影"><svg><use href="#project" /></svg></button>
				</div>
			</div>
		</div>

		<div class="watermark">
			<svg viewBox="0 0 60 58">
				<ellipse cx="20" cy="20" rx="12" ry="20" transform="rotate(-42 20 20)" stroke="#2f5f86" stroke-width="3" />
				<ellipse cx="41" cy="35" rx="12" ry="20" transform="rotate(24 41 35)" stroke="#c9436b" stroke-width="3" />
				<path d="M34 30c-12-4-25 4-25 12s14 12 22 4c5-6 5-12 3-16" stroke="#8499a8" stroke-width="2" />
			</svg>
			<div>
				<strong>野火论坛</strong>
				<span>www.proewildfire.cn</span>
			</div>
		</div>
	</div>

</body>

</html>
```
FILE: styles.css
```css
* {
	margin: 0;
	padding: 0;
	box-sizing: border-box;
}

body {
	font: 10px/16px "Liberation Mono", "Noto Sans CJK SC", monospace;
	color: #1c2630;
	background: #dbe9f2;
}

svg {
	display: block;
	flex: none;
	fill: none;
}

ul {
	list-style: none;
}

button {
	border: none;
	background: none;
	font: inherit;
	color: inherit;
}

.sprite {
	position: absolute;
	width: 0;
	height: 0;
}

.cn {
	font-family: "Noto Sans CJK SC", sans-serif;
	font-size: 12px;
}

.window {
	position: relative;
	display: flex;
	flex-direction: column;
	height: 100vh;
	border: solid #0a41cc;
	border-width: 0 3px 4px;
	background: #dbe9f2;
}

/* 标题栏 */
.titlebar {
	display: flex;
	align-items: center;
	gap: 3px;
	height: 30px;
	flex: none;
	margin: 0 -3px;
	padding: 3px 4px 0 6px;
	background: linear-gradient(#0b50c4 0, #3d95ff 2px, #0759e4 6px, #0454e0 16px, #0566fa 25px, #0458ea 28px, #0340b8);
}

.titlebar .logo {
	width: 14px;
	height: 14px;
	margin-right: 2px;
}

.titlebar h1 {
	flex: 1;
	font-size: 13px;
	line-height: 20px;
	color: #fff;
	text-shadow: 1px 1px #0b2f86;
}

.titlebar .cn {
	font-size: 15px;
}

.win-btn {
	width: 21px;
	height: 21px;
	border: 1px solid #e6efff;
	border-radius: 3px;
	background: linear-gradient(135deg, #7fa6f5, #2a5fe0 50%, #2355cf);
}

.win-btn.close {
	background: linear-gradient(135deg, #f09a80, #db4c26 50%, #c63c17);
}

/* 菜单 */
.menubar {
	display: flex;
	gap: 14px;
	height: 25px;
	flex: none;
	padding-left: 7px;
	background: linear-gradient(#fbfcfd, #e4edf5);
}

.menubar button {
	line-height: 28px;
	white-space: nowrap;
}

/* 工具栏 */
.toolbars {
	display: flex;
	flex: none;
	height: 51px;
	padding: 3px 0 4px 3px;
	border-top: 1px solid #b3c2ce;
	border-bottom: 1px solid #f7fbfd;
	background: linear-gradient(#e3edf4, #d5e3ed);
	overflow: hidden;
}

.rows {
	flex: 1;
	padding-left: 7px;
}

.toolbar {
	display: flex;
	align-items: center;
	height: 27px;
}

.toolbar.second {
	height: 16px;
	align-items: flex-start;
	overflow: hidden;
}

.toolbar button {
	display: flex;
	align-items: center;
	justify-content: center;
	flex: none;
	width: 28px;
	height: 28px;
}

.toolbar svg {
	width: 20px;
	height: 20px;
}

.toolbar button:disabled {
	opacity: .6;
}

.toolbar .more {
	width: 13px;
}

.toolbar .more svg,
.panel-head .more svg {
	width: 9px;
	height: 9px;
}

.toolbar .raised,
.toolbar .pressed {
	width: 24px;
	margin: 2px 2px 0;
	border: 1px solid #9fb0bd;
	border-radius: 3px;
	background: #f4f9fc;
}

.toolbar .pressed {
	border-color: #7a8894;
	background: #c8d6e2;
}

.second button {
	padding-top: 2px;
}

.second .raised,
.second .pressed {
	padding: 0 0 3px;
}

.grip {
	flex: none;
	width: 4px;
	height: 26px;
	margin: 0 7px 0 4px;
	background: radial-gradient(circle, #7b8b99 1px, transparent 1px) 0 0 / 2px 3px;
}

.second .grip {
	margin: 0 5px 0 4px;
}

.grip.first {
	height: 42px;
	margin: 0;
}

.tight {
	display: flex;
}

.tight button {
	width: 27px;
}

.select-box {
	display: flex;
	height: 25px;
	border: 1px solid #aab8c4;
	border-radius: 3px;
}

.select-box button {
	width: 24px;
	height: 23px;
}

.select-box .more {
	width: 12px;
	border-left: 1px solid #aab8c4;
}

/* 消息区 */
.info {
	display: flex;
	flex: none;
	height: 82px;
	padding: 2px 4px 0 3px;
	border-bottom: 1px solid #f7fbfd;
}

.messages {
	flex: 1;
}

.messages li {
	display: flex;
	align-items: center;
	gap: 1px;
	font: 11px/16px "Noto Sans CJK SC", sans-serif;
	color: #3a4652;
}

.messages svg {
	width: 12px;
	height: 12px;
}

.status {
	display: flex;
	align-items: center;
	align-self: flex-end;
	height: 27px;
}

.status label {
	width: 99px;
	padding-left: 4px;
	color: #2a3642;
}

.light {
	display: flex;
	align-items: center;
	justify-content: center;
	width: 32px;
	height: 24px;
	border: solid #b9c8d3;
	border-width: 0 1px;
}

.light svg {
	width: 12px;
	height: 20px;
}

.filter {
	position: relative;
}

.filter::after {
	content: "";
	position: absolute;
	right: 4px;
	top: 8px;
	border: solid transparent;
	border-width: 4px 3px 0;
	border-top-color: #222;
	pointer-events: none;
}

.filter select {
	appearance: none;
	display: block;
	width: 178px;
	height: 20px;
	padding-left: 5px;
	border: 1px solid #8496a5;
	border-radius: 3px;
	background: #fff;
	color: #111;
	font: 12px "Noto Sans CJK SC", sans-serif;
}

/* 主区域 */
.main {
	display: flex;
	flex: 1;
	min-height: 0;
}

.navigator {
	display: grid;
	grid-template: 29px 1fr / 174px 9px;
	flex: none;
	background: #d6e3ec;
}

.tabs {
	display: flex;
	grid-column: span 2;
	align-items: flex-end;
	padding-left: 7px;
}

.tabs button {
	width: 42px;
	height: 27px;
}

.tabs svg {
	width: 44px;
	height: 27px;
}

.panel {
	display: flex;
	flex-direction: column;
	min-height: 0;
	padding: 0 7px 7px;
	border: solid #9aabb8;
	border-width: 1px 1px 0 0;
	border-radius: 0 5px 0 0;
	background: linear-gradient(90deg, #fff, #dde7ef 60px, #d9e5ed);
}

.panel-head {
	display: flex;
	align-items: center;
	height: 29px;
	padding-left: 18px;
}

.panel-head h2 {
	flex: 1;
	font: bold 13px "Noto Sans CJK SC", sans-serif;
	color: #222;
}

.panel-head button {
	display: flex;
	justify-content: center;
	width: 20px;
}

.panel-head .more {
	width: 12px;
	margin-right: 7px;
}

.panel-head .more:last-child {
	margin-right: 0;
}

.panel-head svg {
	width: 20px;
	height: 20px;
}

.tree {
	flex: 1;
	min-height: 0;
	padding-top: 1px;
	border: 1px solid #8b9aa8;
	border-radius: 5px;
	background: #fff;
	overflow: hidden;
}

.root {
	display: flex;
	align-items: center;
	gap: 4px;
	padding-left: 5px;
}

.root svg {
	width: 14px;
	height: 14px;
}

.tree li {
	position: relative;
	display: flex;
	align-items: center;
	gap: 2px;
	height: 16px;
	padding-left: 24px;
	white-space: nowrap;
}

.tree li svg {
	width: 16px;
	height: 16px;
}

.tree li::before,
.tree li::after {
	content: "";
	position: absolute;
	left: 12px;
	top: 0;
	height: 100%;
	border-left: 1px dotted #999;
}

.tree li:last-child::before {
	height: 8px;
}

.tree li::after {
	top: 8px;
	width: 12px;
	height: 0;
	border: none;
	border-top: 1px dotted #999;
}

/* 展开按钮压在虚线上 */
.tree button {
	position: absolute;
	left: 8px;
	z-index: 1;
	width: 9px;
	height: 9px;
	border: 1px solid #a8bccb;
	border-radius: 2px;
	background: #e3eef5;
	color: #1c2630;
	line-height: 7px;
}

.off {
	color: #b5b5b5;
}

.tree .off svg {
	background: #ddd;
	filter: grayscale(1);
	opacity: .4;
}

.selected > span {
	height: 15px;
	outline: 1px dotted #333;
	background: #a2dcde;
	line-height: 15px;
}

.sash {
	padding-top: 147px;
}

.sash button {
	display: flex;
	align-items: center;
	justify-content: center;
	width: 9px;
	height: 94px;
	margin-bottom: 9px;
	border: 1px solid #bccbd6;
	border-right: none;
	border-radius: 3px 0 0 3px;
}

.sash .on {
	border: solid #8997a3;
	border-width: 1px 0 1px 2px;
}

.sash button::before {
	content: "";
	width: 3px;
	height: 3px;
	border-radius: 2px;
	background: #333;
}

.viewport {
	flex: 1;
	min-width: 0;
	background: linear-gradient(#c1d5e6, #a9c3de 25%, #7d9cc6 65%, #5b7bac);
}

.viewport svg {
	width: 100%;
	height: 100%;
}

/* 右侧特征工具 */
.features {
	position: relative;
	display: grid;
	grid-template-columns: 41px 28px 28px;
	flex: none;
	padding-top: 14px;
	background: radial-gradient(circle, #7b8b99 1px, transparent 1px) 0 4px / 3px 2px repeat-x,
		radial-gradient(circle, #7b8b99 1px, transparent 1px) 0 6px / 3px 2px repeat-x, #dbe9f2;
	overflow: hidden;
}

.features button {
	display: flex;
	align-items: center;
	justify-content: center;
	width: 28px;
	height: 28px;
}

.features svg {
	width: 20px;
	height: 20px;
}

.features button:disabled {
	opacity: .55;
}

.dots {
	display: block;
	height: 14px;
	background: radial-gradient(circle, #7b8b99 1px, transparent 1px) 0 5px / 3px 3px repeat-x;
}

/* 弹出箭头 */
.fly {
	position: absolute;
	left: 32px;
	border: solid transparent;
	border-width: 4px 0 4px 4px;
	border-left-color: #222;
}

.fly.one {
	top: 220px;
}

.fly.two {
	top: 444px;
}

.watermark {
	position: absolute;
	right: 0;
	bottom: 0;
	display: flex;
	align-items: center;
	width: 208px;
	height: 63px;
	background: rgba(255, 255, 255, .35);
	pointer-events: none;
}

.watermark svg {
	width: 58px;
	height: 58px;
	opacity: .7;
}

.watermark strong {
	display: block;
	padding-left: 12px;
	font: bold 30px/36px "Noto Sans CJK SC", sans-serif;
	color: rgba(60, 175, 115, .7);
}

.watermark span {
	display: block;
	font: 16px/22px "Liberation Sans", sans-serif;
	color: rgba(130, 150, 160, .6);
}
```
